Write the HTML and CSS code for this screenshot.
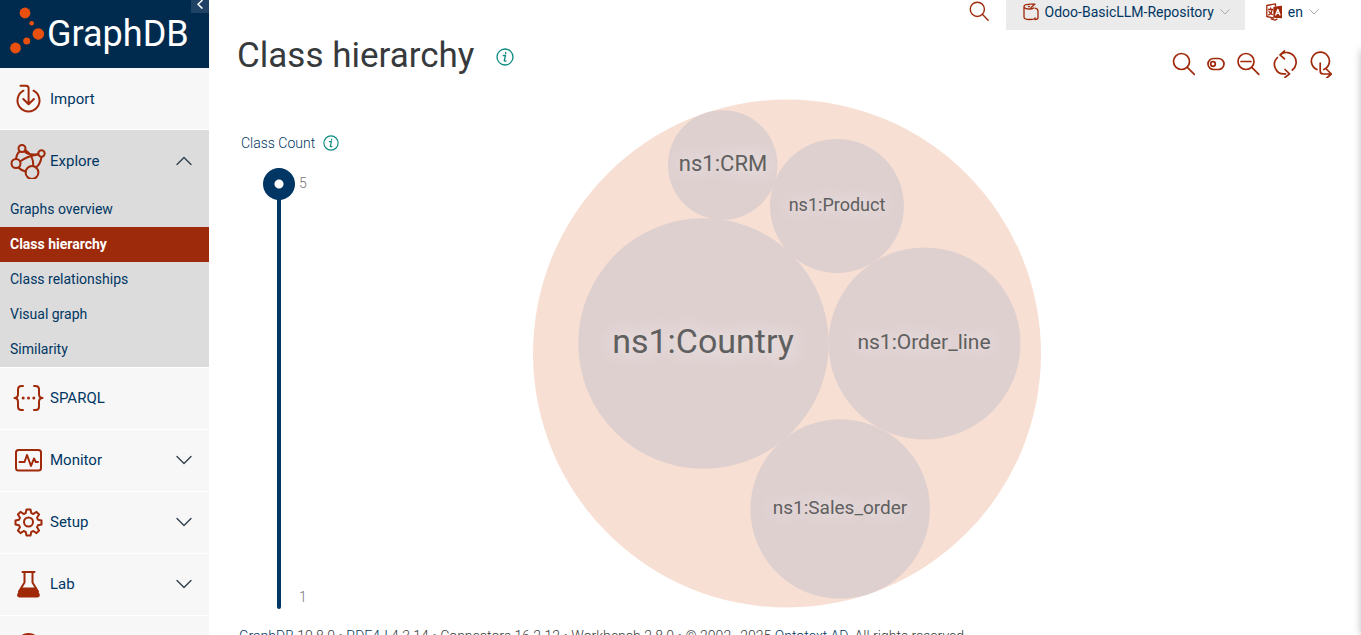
FILE: index.html
```html
<!DOCTYPE html>
<html lang="en">
<head>
<meta charset="utf-8">
<title>Class hierarchy | GraphDB Workbench</title>
<link rel="stylesheet" href="styles.css">
</head>
<body>
<div class="app">
  <nav class="sidebar" aria-label="Main menu">
    <div class="brand">
      <a class="brand-link" href="#" aria-label="GraphDB">
        <svg class="brand-mark" viewBox="0 0 36 50" aria-hidden="true">
          <circle cx="15" cy="7" r="5.4"/><circle cx="21.700" cy="17.300" r="2.300"/><circle cx="28.300" cy="28" r="5.800"/><circle cx="16.700" cy="35" r="3.500"/><circle cx="5.500" cy="42" r="5.400"/>
        </svg>
        <span class="brand-name">GraphDB</span>
      </a>
      <button class="collapse" type="button" aria-label="Collapse menu"><svg width="18" height="13" viewBox="0 0 18 13"><path d="M11 0.500 7 4.300l4 3.800"/></svg></button>
    </div>
    <ul class="menu">
      <li class="item"><a class="row" href="#">
        <svg class="icon" viewBox="0 0 36 36"><path d="M13.500 9.700A11 11 0 1 0 23.500 9.700M10.500 4.700h5.500q2.600 0 2.600 2.600v15.500M13.300 18l5.300 5.200 5.300-5.200"/></svg>
        <span>Import</span></a></li>
      <li class="item open">
        <button class="row" type="button" aria-expanded="true">
        <svg class="icon" viewBox="0 0 36 36"><circle cx="12" cy="5.500" r="3.500"/><circle cx="31.500" cy="10.500" r="3.200"/><circle cx="6" cy="20.500" r="4.500"/><circle cx="22" cy="29.500" r="6.400"/><path d="M9.500 8.500Q6.500 11 6 16M15.300 7C21 10.500 23.500 15.500 23.300 23M28.300 11.500C21 12.500 14.500 15 10 18.500M31.500 14Q30.500 21 26 24.500M8.500 24.500Q11 27.500 15.800 28.500M14.500 8.500q5 4.500 13.800 2.500"/></svg>
        <span>Explore</span>
        <svg class="arrow" viewBox="0 0 16 10"><path d="M1 8.500 8 1.500l7 7"/></svg></button>
        <ul class="submenu">
          <li><a href="#">Graphs overview</a></li>
          <li><a class="active" href="#" aria-current="page">Class hierarchy</a></li>
          <li><a href="#">Class relationships</a></li>
          <li><a href="#">Visual graph</a></li>
          <li><a href="#">Similarity</a></li>
        </ul>
      </li>
      <li class="item"><a class="row" href="#">
        <svg class="icon" viewBox="0 0 36 36"><path d="M13 6h-1.500q-3.500 0-3.500 3.500v4.500q0 4-3.500 4 3.500 0 3.500 4v4.500Q8 30 11.500 30H13M24 6h1.500Q29 6 29 9.500V14q0 4 3.500 4-3.500 0-3.500 4v4.500q0 3.500-3.500 3.500H24"/><g class="solid"><circle cx="13.200" cy="18" r="1.500"/><circle cx="18.500" cy="18" r="1.500"/><circle cx="23.800" cy="18" r="1.500"/></g></svg>
        <span>SPARQL</span></a></li>
      <li class="item"><button class="row" type="button">
        <svg class="icon" viewBox="0 0 36 36"><rect x="6" y="8" width="25" height="20.500" rx="2.500"/><path d="M9.500 20h5l2.500-7 4 11 3-7.500 1.800 3.500H28"/></svg>
        <span>Monitor</span>
        <svg class="arrow" viewBox="0 0 16 10"><path d="M1 1.500l7 7 7-7"/></svg></button></li>
      <li class="item"><button class="row" type="button">
        <svg class="icon" viewBox="0 0 36 36"><circle cx="18.500" cy="18" r="4.500"/><path d="M16.500 5.500h4l.8 3.600 2 .9 3.200-2.100 2.600 2.600-2.100 3.200.9 2 3.600.8v4l-3.600.8-.9 2 2.100 3.200-2.600 2.600-3.200-2.100-2 .9-.8 3.600h-4l-.8-3.600-2-.9-3.200 2.100-2.600-2.600 2.100-3.200-.9-2-3.600-.8v-4l3.600-.8.9-2-2.100-3.200 2.600-2.600 3.200 2.100 2-.9z"/></svg>
        <span>Setup</span>
        <svg class="arrow" viewBox="0 0 16 10"><path d="M1 1.500l7 7 7-7"/></svg></button></li>
      <li class="item"><button class="row" type="button">
        <svg class="icon" viewBox="0 0 36 36"><path d="M12.500 6h12M14.500 6v10.500L9 25.500M22.500 6v10.500L28 25.500"/><path class="solid" d="M11 21.500h15l3.600 6.600q.9 3-2 3.300H9.300q-3-.3-2-3.300z"/></svg>
        <span>Lab</span>
        <svg class="arrow" viewBox="0 0 16 10"><path d="M1 1.500l7 7 7-7"/></svg></button></li>
      <li class="item"><button class="row" type="button">
        <svg class="icon" viewBox="0 0 36 36"><circle cx="18.500" cy="18" r="12"/><path d="M14.500 15q0-4 4-4t4 4q0 2-2 3.200t-2 3.300"/><circle class="solid" cx="18.500" cy="25" r="1"/></svg>
        <span>Help</span>
        <svg class="arrow" viewBox="0 0 16 10"><path d="M1 1.500l7 7 7-7"/></svg></button></li>
    </ul>
  </nav>

  <div class="page">
    <header class="topbar">
      <button class="tool search" type="button" aria-label="Search resources"><svg width="20" height="20" viewBox="0 0 24 24"><circle cx="10" cy="10" r="8.500"/><path d="M16 16l7 7"/></svg></button>
      <button class="repo" type="button" aria-haspopup="true">
        <svg class="repo-icon" width="16" height="18" viewBox="0 0 16 18"><path d="M9.500 1.200Q1 .8 1 3.300V14q0 2.500 5.500 2.500t5.500-1.500M1 3.300Q1 6 6.500 6q3 0 4-1M12 5.200q3 .5 3 2.800v6.500q0 2-3 2"/><path d="M5.500 3.500h.8M8 4.500 11 2M10 1.200h2"/></svg>
        <span>Odoo-BasicLLM-Repository</span>
        <svg class="caret" width="10" height="6" viewBox="0 0 10 6"><path d="M.8.8 5 5 9.200.8"/></svg>
      </button>
      <button class="lang" type="button" aria-haspopup="true">
        <svg class="lang-icon" width="16" height="18" viewBox="0 0 16 18"><path class="solid" d="M8 4.500 15.500 3.500v11L8 14z"/><path d="M.8 2.500 9.500.8V3M.8 2.500v11L7.500 15M2.500 6.500h4.300M4.600 5v1.500M2.500 12q3.300-1.500 3.500-5M3 8.500q1.500 2.500 3.300 3M5 16l4 1.200 2-1"/><path class="glyph" d="M9.700 12 11.800 6.300 14 12M10.500 10.300h2.700"/></svg>
        <span>en</span>
        <svg class="caret" width="10" height="6" viewBox="0 0 10 6"><path d="M.8.8 5 5 9.200.8"/></svg>
      </button>
    </header>

    <main class="content">
      <div class="heading">
        <h1>Class hierarchy</h1>
        <button class="info info-large" type="button" aria-label="About this view"><svg viewBox="0 0 18 18"><circle cx="9" cy="9" r="8"/><path d="M7.200 7.500H9.500L8.300 12.500q-.2 1 1.700.3M9.700 4.500v1.200"/></svg></button>
        <div class="toolbar">
          <button class="tool" type="button" aria-label="Find class"><svg width="24" height="28" viewBox="0 0 24 28"><circle cx="10.500" cy="11.500" r="8"/><path d="M16.300 17.300l7 7"/></svg></button>
          <button class="tool" type="button" aria-label="Show prefixes"><svg width="18" height="28" viewBox="0 0 18 28"><rect x="1" y="8.500" width="16" height="11" rx="5.500"/><circle cx="6" cy="14" r="2.300"/></svg></button>
          <button class="tool" type="button" aria-label="Focus diagram"><svg width="24" height="28" viewBox="0 0 24 28"><circle cx="9" cy="11.500" r="8"/><path d="M14.800 17.300l7 7M4 11.500h10"/></svg></button>
          <button class="tool" type="button" aria-label="Reload diagram"><svg width="24" height="28" viewBox="0 0 24 28"><path d="M4.500 7.500A9.500 9.500 0 0 0 12.500 23.800M19.300 20A9.500 9.500 0 0 0 7.500 4.500M11.500 1 7 4.800l4.500 4M12 19.500l4.500 4.300L12 27.500"/></svg></button>
          <button class="tool" type="button" aria-label="Export diagram"><svg width="24" height="28" viewBox="0 0 24 28"><path d="M8 19.500A9 9 0 1 1 14.800 19.500M11.200 13v8q0 3 3 3h7.500M17.800 19.500l4.500 4.500-4.500 4"/></svg></button>
        </div>
      </div>

      <div class="workspace">
        <section class="counter">
          <div class="counter-title"><label for="count">Class Count</label>
            <button class="info" type="button" aria-label="About class count"><svg viewBox="0 0 18 18"><circle cx="9" cy="9" r="8"/><path d="M7.200 7.500H9.500L8.300 12.500q-.2 1 1.700.3M9.700 4.500v1.200"/></svg></button>
          </div>
          <div class="slider">
            <input id="count" type="range" min="1" max="5" value="5">
            <div class="limits"><span>5</span><span>1</span></div>
          </div>
        </section>
        <svg class="diagram" viewBox="0 0 508 509" role="img" aria-label="Class hierarchy diagram">
          <circle class="root" cx="254" cy="254.500" r="254"/>
          <g class="leaf">
            <circle cx="170.500" cy="244.500" r="125.300"/>
            <circle cx="189.700" cy="66" r="54.800"/>
            <circle cx="304" cy="107" r="67"/>
            <circle cx="391.500" cy="244.500" r="96"/>
            <circle cx="307.200" cy="410" r="89.800"/>
          </g>
          <g class="names">
            <text class="t34" x="170" y="254">ns1:Country</text>
            <text class="t22" x="190" y="72">ns1:CRM</text>
            <text class="t18" x="304" y="112">ns1:Product</text>
            <text class="t21" x="391" y="250">ns1:Order_line</text>
            <text class="t19" x="307" y="415">ns1:Sales_order</text>
          </g>
        </svg>
      </div>
    </main>
    <footer class="footer"><a href="#">GraphDB</a> 10.8.0 • <a href="#">RDF4J</a> 4.3.14 • Connectors 16.2.12 • Workbench 2.8.0 • © 2002–2025 <a href="#">Ontotext AD</a>. All rights reserved.</footer>
  </div>
  <aside class="drawer" aria-hidden="true"></aside>
</div>
</body>
</html>
```
FILE: styles.css
```css
* { box-sizing: border-box; }
body { margin: 0; overflow: hidden; background: #fff; color: #373a3c; font: 14px/20px Roboto, "Liberation Sans", sans-serif; }
button { margin: 0; padding: 0; border: 0; background: none; color: inherit; font: inherit; cursor: pointer; }
a { color: #003663; text-decoration: none; }
ul { margin: 0; padding: 0; list-style: none; }
svg { display: block; flex: none; fill: none; stroke-linecap: round; stroke-linejoin: round; }

.app { display: flex; height: 100vh; overflow: hidden; }

/* Sidebar */
.sidebar { flex: none; width: 209px; background: #f7f7f7; overflow: hidden; }
.brand { position: relative; height: 68px; background: #002b4f; }
.brand-link { display: flex; gap: 1px; height: 68px; padding: 6px 0 0 10px; color: #fff; }
.brand-mark { width: 36px; height: 50px; fill: #ea4f0e; }
.brand-name { font-weight: 400; font-size: 36px; line-height: 56px; }
.collapse { position: absolute; top: 0; right: 0; background: #204365; }
.collapse svg { stroke: #fff; stroke-width: 1.500; }
.item { border-bottom: 1px solid #fff; }
.item.open { background: #dcdcdc; }
.row { display: flex; align-items: center; gap: 4px; width: 100%; height: 61px; padding: 0 17px 0 10px; color: #003663; font-size: 15px; text-align: left; }
.open .row { height: 62px; }
.open ~ .item .row { padding-bottom: 1px; }
.icon { width: 36px; height: 36px; stroke: #a0290a; stroke-width: 2; }
.icon .solid { fill: #a0290a; stroke: none; }
.arrow { width: 16px; height: 10px; margin-left: auto; stroke: #33414d; stroke-width: 1.400; }
.submenu a { display: block; padding: 0 10px; line-height: 35px; }
.submenu .active { background: #9d2a0b; color: #fff; font-weight: 700; }

/* Top bar */
.page { flex: 1; min-width: 0; }
.topbar { display: flex; justify-content: flex-end; height: 30px; padding-right: 42px; }
.tool { stroke: #a0290a; stroke-width: 1.700; }
.search { margin-right: 17px; padding-bottom: 8px; }
.repo, .lang { display: flex; align-items: center; gap: 6px; padding: 0 16px 6px; color: #003663; }
.repo { padding-left: 17px; padding-right: 15px; background: #ebebeb; }
.lang { padding: 0 0 6px 21px; }
.caret { stroke: #aaa; stroke-width: 1; }
.repo-icon, .lang-icon { stroke: #a0290a; stroke-width: 1.300; }
.lang-icon .solid { fill: #a0290a; }
.lang-icon .glyph { stroke: #fff; }

/* Content */
.content { padding: 6px 28px 0; }
.heading { display: flex; align-items: center; height: 40px; }
h1 { margin: 0; font-weight: 400; font-size: 35px; line-height: 40px; }
.info { stroke: #0c8b7f; stroke-width: 1.300; }
.info svg { width: 16px; height: 16px; }
.info-large { margin: 2px 0 0 22px; }
.info-large svg { width: 18px; height: 18px; }
.toolbar { display: flex; gap: 12px; margin: 16px 0 0 auto; }
.workspace { display: grid; grid-template-columns: 1fr minmax(0, 508px) 1fr; margin-top: 23px; padding-left: 4px; }
.counter { padding-top: 34px; }
.counter-title { display: flex; align-items: center; gap: 8px; color: #003663; font-weight: 300; }
.slider { display: flex; gap: 4px; margin: 15px 0 0 22px; }
.slider input { width: 32px; height: 441px; margin: 0; appearance: none; background: none; writing-mode: vertical-lr; direction: rtl; }
.slider input::-webkit-slider-runnable-track { width: 4px; border-radius: 2px; background: #003663; }
.slider input::-webkit-slider-thumb { width: 32px; height: 32px; margin-left: -14px; appearance: none; border-radius: 50%; background: radial-gradient(circle, #fff 0 4px, #003663 5px); }
.limits { display: flex; flex-direction: column; justify-content: space-between; padding: 5px 0 2px; color: #777; font-weight: 300; }
.diagram { width: 100%; }
.root { fill: #f8dfd3; }
.leaf { fill: #dfd0d0; }
.names { fill: #5f5f5f; text-anchor: middle; text-shadow: 0 0 20px #fff; }
.t34 { font-size: 34px; }
.t22 { font-size: 22px; }
.t21 { font-size: 21px; }
.t19 { font-size: 19px; }
.t18 { font-size: 18px; }
.footer { padding: 17px 30px; font-weight: 300; }

.drawer { position: fixed; top: 50px; bottom: 0; left: 100%; width: 300px; box-shadow: 0 0 8px rgba(0, 0, 0, .25); }
```
